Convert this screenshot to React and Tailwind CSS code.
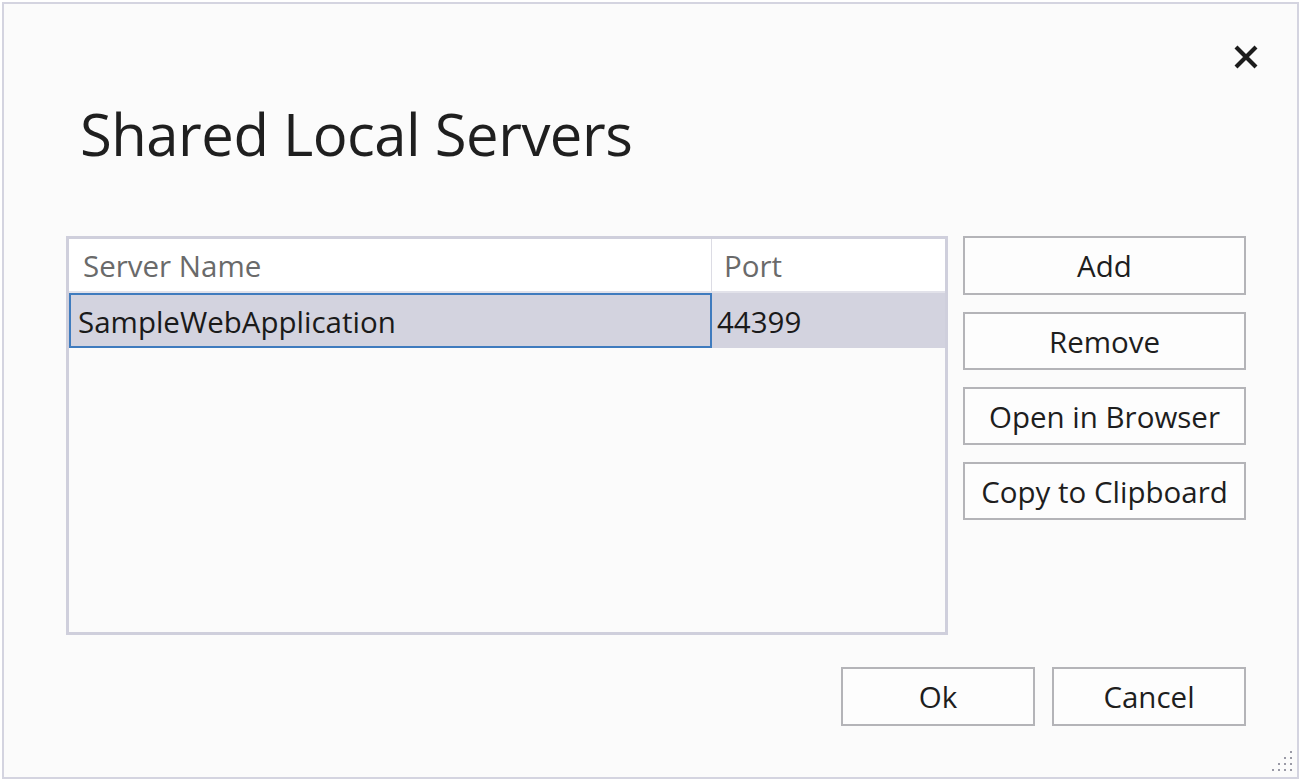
import React from "react";

const font = { fontFamily: '"Open Sans", "Noto Sans", sans-serif' };

function Btn({ children, className = "" }) {
  return (
    <div
      className={
        "flex items-center justify-center border-2 border-[#b4b4b8] bg-[#fdfdfd] text-[29.5px] text-[#1e1e1e] leading-none pt-[1px] " +
        className
      }
    >
      {children}
    </div>
  );
}

function Grip() {
  const dots = [
    [3, 0],
    [2, 1], [3, 1],
    [1, 2], [2, 2], [3, 2],
    [0, 3], [1, 3], [2, 3], [3, 3],
  ];
  return (
    <svg width="26" height="28" viewBox="0 0 26 28">
      {dots.map(([c, r], i) => (
        <rect key={i} x={2 + c * 6} y={4 + r * 6} width="2" height="2" fill="#9a9aa6" />
      ))}
    </svg>
  );
}

export default function App() {
  return (
    <div className="w-[1303px] h-[783px] bg-white p-[2px]" style={font}>
      <div className="w-[1297px] h-[777px] border-2 border-[#d4d4e0] bg-[#fbfbfb] flex flex-col">
        {/* top area */}
        <div className="h-[232px] flex flex-col">
          <div className="flex justify-end pr-[38px] pt-[40px]">
            <svg width="26" height="26" viewBox="0 0 26 26">
              <path d="M3 3 L23 23 M23 3 L3 23" stroke="#1c1c1c" strokeWidth="4.2" strokeLinecap="butt" />
            </svg>
          </div>
          <div className="pl-[76px] pt-[35px] text-[58px] leading-none font-normal text-[#1f1f1f] tracking-[-0.5px]">
            Shared Local Servers
          </div>
        </div>

        {/* middle row */}
        <div className="flex pl-[62px] gap-[15px]">
          <div className="w-[882px] h-[399px] border-[3px] border-[#cfcfdc] bg-[#fbfbfb] flex flex-col">
            <div className="flex h-[54px] bg-white border-b-2 border-[#e2e2ea]">
              <div className="w-[643px] border-r border-[#dcdce4] flex items-center pl-[14px] text-[29.5px] text-[#6a6a6a] pt-[2px]">
                Server Name
              </div>
              <div className="flex-1 flex items-center pl-[12px] text-[29.5px] text-[#6a6a6a] pt-[2px]">Port</div>
            </div>
            <div className="flex h-[55px] bg-[#d3d3df]">
              <div className="w-[643px] border-2 border-[#3f7bbe] flex items-center pl-[7px] text-[29.5px] text-[#1a1a1a] pt-[3px]">
                SampleWebApplication
              </div>
              <div className="flex-1 flex items-center pl-[5px] text-[29.5px] text-[#1a1a1a] pt-[3px]">44399</div>
            </div>
          </div>
          <div className="w-[283px] flex flex-col gap-[17px]">
            <Btn className="h-[59px]">Add</Btn>
            <Btn className="h-[58px]">Remove</Btn>
            <Btn className="h-[58px]">Open in Browser</Btn>
            <Btn className="h-[58px]">Copy to Clipboard</Btn>
          </div>
        </div>

        {/* bottom row */}
        <div className="flex justify-end gap-[17px] pr-[51px] mt-[32px]">
          <Btn className="w-[194px] h-[59px]">Ok</Btn>
          <Btn className="w-[194px] h-[59px]">Cancel</Btn>
        </div>

        <div className="flex-1 flex items-end justify-end pr-[1px] pb-[2px]">
          <Grip />
        </div>
      </div>
    </div>
  );
}
